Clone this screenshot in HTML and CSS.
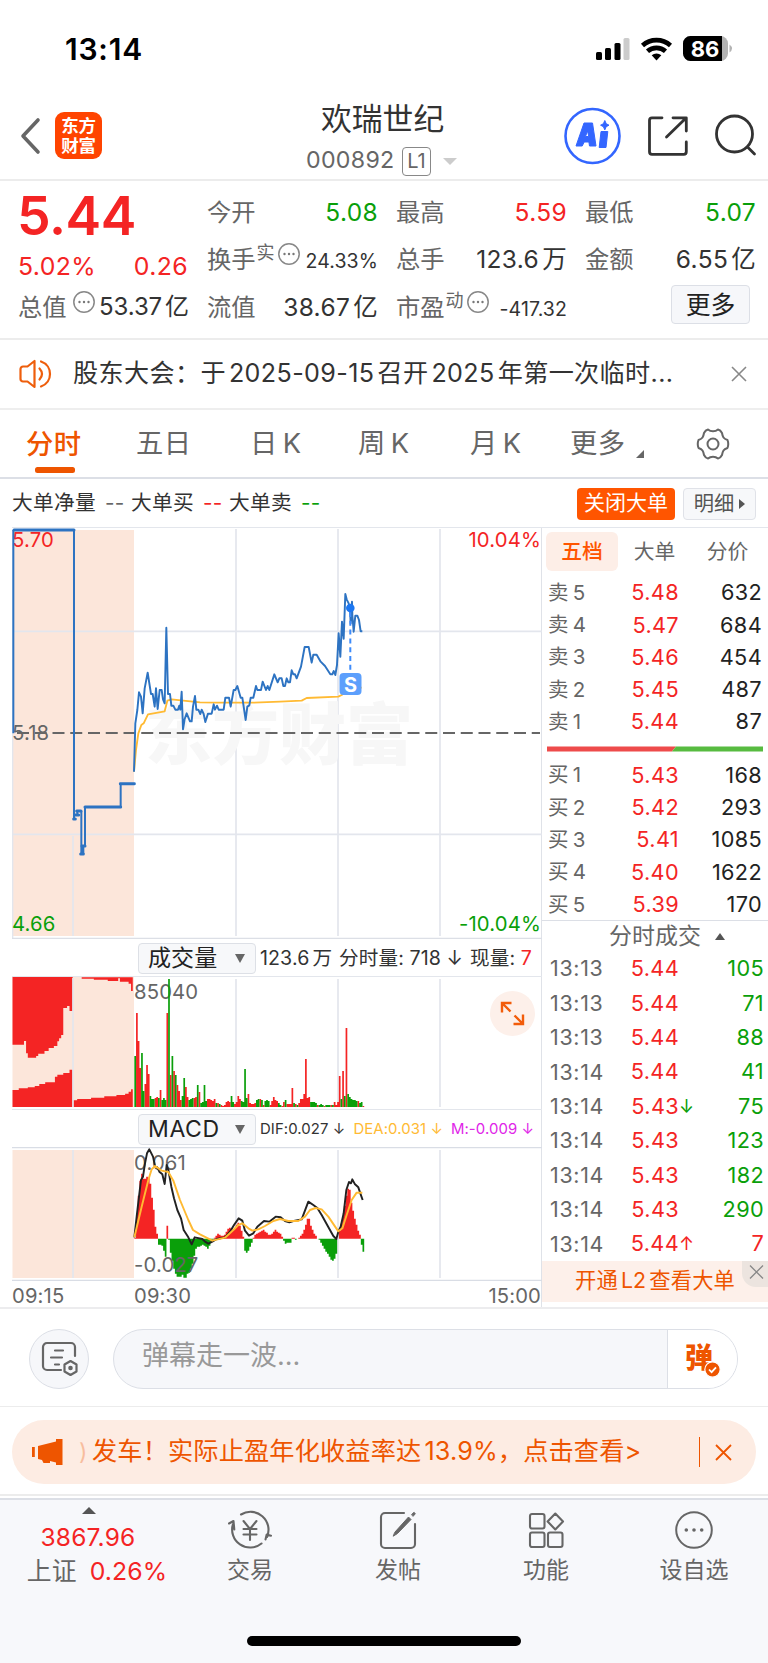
FILE: index.html
```html
<!DOCTYPE html>
<html lang="zh-CN">
<head>
<meta charset="utf-8">
<title>欢瑞世纪 000892</title>
<link rel="stylesheet" href="styles.css">
</head>
<body>
<header class="status">
  <span class="clock">13:14</span>
  <svg class="status-icons" width="138" height="28" viewBox="0 0 138 28">
    <g fill="#000"><rect x="1" y="17" width="6" height="8" rx="1.500"/><rect x="10" y="13" width="6" height="12" rx="1.500"/><rect x="19.500" y="8" width="6" height="17" rx="1.500"/></g>
    <rect x="28.500" y="3" width="6" height="22" rx="1.500" fill="#ccc"/>
    <g fill="none" stroke="#000" stroke-width="4.600"><path d="M47.500 10.500a21 21 0 0 1 28 0"/><path d="M52.500 16.300a13.500 13.500 0 0 1 18 0"/></g>
    <path d="M61.500 25.500l-4.800-5.200a7.200 7.200 0 0 1 9.600 0z" fill="#000"/>
    <rect x="88" y="1" width="45" height="25" rx="7.500" fill="#b3b3b3"/><path d="M95.500 1H127v25H95.500A7.500 7.500 0 0 1 88 18.500v-10A7.500 7.500 0 0 1 95.500 1z" fill="#000"/>
    <path d="M134.500 9.500q5 4 0 8z" fill="#b3b3b3"/>
    <text x="110" y="21.500" text-anchor="middle" class="battery">86</text>
  </svg>
</header>

<nav class="head">
  <svg class="back" width="22" height="38" viewBox="0 0 22 38"><path d="M18 3L3 19l15 16" fill="none" stroke="#666" stroke-width="3.600" stroke-linecap="round" stroke-linejoin="round"/></svg>
  <div class="logo"><span>东方</span><span>财富</span></div>
  <div class="title">
    <h1>欢瑞世纪</h1>
    <div class="code"><span>000892</span><b>L1</b><i class="tri-down"></i></div>
  </div>
  <svg class="head-icons" width="196" height="60" viewBox="562 106 196 60">
    <circle cx="592.500" cy="136" r="27" fill="none" stroke="#3366ff" stroke-width="2.600"/>
    <path d="M584 123h8.500l3.500 23h-6.500l-.6-4h-4.700l-2 4h-6.200zM587.500 131l-2 5.500h3.300zM601 131.500h6.800l-1.800 16h-6.800zM604.800 120.500l1.400 3.200 2.800 1.500-2.800 1.500-1.400 3.200-1.400-3.200-2.800-1.500 2.800-1.500z" fill="#3366ff" fill-rule="evenodd" stroke="#3366ff" stroke-linejoin="round"/>
    <g fill="none" stroke="#333" stroke-width="2.800" stroke-linecap="round" stroke-linejoin="round"><path d="M662 117.800h-10a2.500 2.500 0 0 0-2.500 2.500v31.500a2.500 2.500 0 0 0 2.500 2.500h31.800a2.500 2.500 0 0 0 2.500-2.500V142M673 117.800h13.300V131M685.500 118.500L666.500 137"/><circle cx="734.500" cy="134" r="18"/><path d="M747.500 147l7 7"/></g>
  </svg>
</nav>

<section class="quote">
  <div class="col">
    <div class="price">5.44</div>
    <div class="row chg red"><span>5.02%</span><span>0.26</span></div>
    <div class="row"><label>总值</label><svg class="more-dot first" viewBox="0 0 22 22"><use href="#dots"/></svg><em>53.37<u></u>亿</em></div>
  </div>
  <div class="col">
    <div class="row"><label>今开</label><em class="green">5.08</em></div>
    <div class="row"><label>换手<sup>实</sup></label><svg class="more-dot" viewBox="0 0 22 22"><use href="#dots"/></svg><em class="small">24.33%</em></div>
    <div class="row"><label>流值</label><em>38.67<u></u>亿</em></div>
  </div>
  <div class="col">
    <div class="row"><label>最高</label><em class="red">5.59</em></div>
    <div class="row"><label>总手</label><em>123.6<u></u>万</em></div>
    <div class="row"><label>市盈<sup>动</sup></label><svg class="more-dot" viewBox="0 0 22 22"><use href="#dots"/></svg><em class="small">-417.32</em></div>
  </div>
  <div class="col">
    <div class="row"><label>最低</label><em class="green">5.07</em></div>
    <div class="row"><label>金额</label><em>6.55<u></u>亿</em></div>
    <div class="row end"><span class="btn-more">更多</span></div>
  </div>
</section>

<section class="notice">
  <svg width="34" height="30" viewBox="0 0 34 30" fill="none" stroke="#ee5e0c" stroke-width="2.200" stroke-linejoin="round" stroke-linecap="round"><path d="M15.500 2v26l-7-5.500H4A2.500 2.500 0 0 1 1.500 20V10A2.500 2.500 0 0 1 4 7.500h4.500z"/><path d="M20.500 9.500q5 5.500 0 11M22 2.500c12 4 12 21 0 25"/></svg>
  <p>股东大会：于<u></u>2025-09-15<u></u>召开<u></u>2025<u></u>年第一次临时...</p>
  <svg width="16" height="16" viewBox="0 0 16 16"><path d="M1 1l14 14M15 1L1 15" stroke="#888" stroke-width="1.600"/></svg>
</section>

<nav class="tabs">
  <span class="on">分时</span><span>五日</span><span>日<u></u>K</span><span>周<u></u>K</span><span>月<u></u>K</span><span>更多</span><i class="corner"></i>
  <svg width="34" height="34" viewBox="0 0 34 34" fill="none" stroke="#666" stroke-width="2" stroke-linejoin="round"><path d="M12 2.500q2 1.800 5 1.800t5-1.800q2.500.5 4 3.500.5 3 1.500 4.500t4 2.500q1.500 4 0 8-3 1-4 2.500T26 28q-1.500 3-4 3.500-2-1.800-5-1.800t-5 1.800Q9.500 31 8 28q-.5-3-1.500-4.500T2.500 21q-1.500-4 0-8 3-1 4-2.500T8 6q1.500-3 4-3.500z"/><circle cx="17" cy="17" r="5.500"/></svg>
</nav>

<section class="orders">
  <span>大单净量</span><span class="gray d">--</span><span>大单买</span><span class="red d">--</span><span>大单卖</span><span class="green d">--</span>
  <b class="btn-close">关闭大单</b><b class="btn-detail">明细<i></i></b>
</section>

<main class="market">
  <div class="charts">
    <svg class="chart-price" width="530" height="412" viewBox="12 527 530 412">
      <path d="M12 527.500H542" stroke="#e3e6ec" stroke-width="1"/>
      <rect x="12.500" y="530" width="121.500" height="406" fill="#fce6da"/>
      <path d="M12.500 530V938M12 631.300H542M12 834.300H542M73 836V936M236 529V936M338 529V936M440 529V936" stroke="#e3e6ed" stroke-width="1.700" fill="none"/>
      <text x="145" y="759" class="watermark">东方财富</text>
      <path d="M12 733H540" stroke="#666" stroke-width="2" stroke-dasharray="12 5.750" stroke-dashoffset="-5"/>
      <text x="12" y="547" class="axis red">5.70</text><text x="12" y="740" class="axis gray">5.18</text><text x="12" y="931" class="axis green">4.66</text>
      <text x="541" y="547" class="axis red" text-anchor="end">10.04%</text><text x="541" y="931" class="axis green" text-anchor="end">-10.04%</text>
      <g transform="translate(0 520) scale(.33333)" fill="none" stroke="#2d73c2">
        <path stroke-width="6" d="M40 640V30M222 30V897M232 885V873M244 873V1002M250 1002V978H255V861M362 861V791"/>
        <path stroke-width="9" stroke-linecap="round" d="M42 30H222M221 897H226M224 885H236M230 873H243M242 1002H250M246 978H255M255 861H362M361 791H403"/>
      </g>
      <g transform="translate(120 560) scale(.33333)" fill="none" stroke-linejoin="round">
        <polyline stroke="#ffba33" stroke-width="5.500" points="42,635 48,570 55,520 64,495 71,490 84,463 134,454 142,422 155,418 190,422 240,427 290,428 400,428 480,425 545,422 560,414 655,410 665,405 675,398 690,385 725,383"/>
        <polyline stroke="#2d73c2" stroke-width="5.800" points="42,635 46,490 52,450 57,397 63,410 68,460 74,385 83,338 93,402 98,402 104,440 108,385 113,447 119,390 125,390 129,418 134,430 139,203 144,402 150,402 154,437 160,437 166,449 174,449 178,437 181,449 185,395 189,508 194,477 200,460 210,484 215,484 219,440 225,408 229,449 235,449 241,462 245,449 251,462 256,486 264,461 275,461 281,433 285,449 291,437 296,449 311,449 316,413 327,413 332,440 341,390 346,390 352,378 362,413 367,413 377,480 382,440 388,436 392,413 400,413 408,378 412,390 423,390 428,365 438,390 443,378 448,390 463,343 473,367 478,355 485,355 490,378 495,378 500,355 505,367 510,367 515,331 520,343 525,343 530,355 543,320 554,261 566,261 575,308 580,284 590,284 602,305 615,318 631,343 637,343 641,333 646,345 651,315 656,220 661,290 666,185 671,236 676,102 680,118 686,130 690,150 692,190 696,125 697,165 701,215 706,167 712,167 717,180 722,214 727,214"/>
      </g>
      <path d="M350.300 612V674" stroke="#3d8bfa" stroke-width="2" stroke-dasharray="5 3.800"/><circle cx="350.300" cy="608" r="4.300" fill="#1c77f2"/>
      <rect x="339.500" y="673" width="22" height="22" rx="4" fill="#5c9ffc"/><text x="350.500" y="691.500" text-anchor="middle" class="sell">S</text>
      <path d="M12 938.500H542" stroke="#dcdfe6" stroke-width="1.500"/>
    </svg>
    <div class="indicator">
      <div class="select"><span>成交量</span><i></i></div>
      <span class="vol-a">123.6<u></u>万</span><span class="vol-b">分时量: 718 ↓</span><span>现量: <b class="red">7</b></span>
    </div>
    <svg width="530" height="134" viewBox="12 976 530 134">
      <path d="M12 976.500H542M12 1109.500H542" stroke="#e3e6ec"/>
      <rect x="12.500" y="977" width="121.500" height="130" fill="#fce6da"/>
      <g transform="translate(0 930) scale(.34758 .33333)" fill="#f42424">
        <path d="M36 141H209V243H200V228H193V234H182V315H176V325H170V334H165V348H155V354H140V363H128V371H110V378H104V383H80V370H75V333H69V344H36zM36 531V480H54V475H80V472H100V468H113V462H130V457H158V440H165V434H182V429H200V419H209V531zM235 142H382V183H377V161H370V155H345V145H340V153H310V149H270V146H235zM210 531V511H222V507H262V503H300V499H335V495H360V491H370V485H377V478H382V531z"/>
      </g>
      <path d="M73 978V1107M236 979V1107M338 979V1107M440 979V1107" stroke="#e3e6ed" stroke-width="1.700"/>
      <text x="134" y="998.500" class="axis gray">85040</text>
      <path id="vol-up" class="up"/><path id="vol-down" class="down"/>
      <circle cx="512.500" cy="1013.500" r="22.500" fill="#fdf0ea"/>
      <path d="M510.500 1011.500L502 1003M502 1012.500V1003H511.500M514.500 1015.500l8.500 8.500M523 1014.500V1024H513.500" fill="none" stroke="#f25c0a" stroke-width="2.400"/>
    </svg>
    <div class="indicator macd">
      <div class="select"><span>MACD</span><i></i></div>
      <span>DIF:0.027 ↓</span><span class="amber">DEA:0.031 ↓</span><span class="violet">M:-0.009 ↓</span>
    </div>
    <svg width="530" height="134" viewBox="12 1147 530 134">
      <path d="M12 1147.500H542M12 1280.500H542" stroke="#d9dde5" stroke-width="1.300"/>
      <rect x="12.500" y="1150" width="121.500" height="128" fill="#fce6da"/>
      <path d="M73 1150V1278M236 1150V1278M338 1150V1278M440 1150V1278" stroke="#e3e6ed" stroke-width="1.700"/>
      <path id="macd-up" class="up"/><path id="macd-down" class="down"/>
      <text x="134" y="1169.500" class="axis gray">0.061</text><text x="134" y="1272" class="axis gray">-0.027</text>
      <g transform="translate(125 1030) scale(.33333)" fill="none" stroke-width="5.800" stroke-linejoin="round">
        <polyline stroke="#222" points="28,622 35,560 42,500 48,450 54,440 60,400 66,370 73,358 84,380 91,412 97,412 103,425 112,433 119,462 125,405 130,420 139,470 147,505 157,540 168,565 176,600 190,622 200,643 209,622 232,627 240,635 250,641 262,635 275,627 300,622 315,605 327,585 341,565 352,572 360,602 372,617 385,610 397,590 417,573 433,575 452,560 467,562 480,573 493,577 510,572 530,568 550,515 565,525 577,534 590,555 612,595 625,618 634,627 640,605 647,590 656,550 664,480 672,456 678,460 682,448 690,463 700,472 706,490 713,510"/>
        <polyline stroke="#ffba33" points="28,622 50,530 70,450 80,418 90,408 110,422 130,426 145,452 165,510 190,570 204,600 225,613 262,632 300,623 325,600 340,585 352,580 370,595 382,602 400,598 420,588 445,573 465,567 490,573 520,573 540,560 555,540 572,534 590,538 610,560 640,604 652,595 665,555 680,510 695,488 712,488"/>
      </g>
    </svg>
    <div class="times"><span>09:15</span><span>09:30</span><span>15:00</span></div>
  </div>

  <aside class="book">
    <div class="book-tabs"><b>五档</b><span>大单</span><span>分价</span></div>
    <div class="levels">
      <div><span>卖<u></u>5</span><span>5.48</span><span>632</span></div>
      <div><span>卖<u></u>4</span><span>5.47</span><span>684</span></div>
      <div><span>卖<u></u>3</span><span>5.46</span><span>454</span></div>
      <div><span>卖<u></u>2</span><span>5.45</span><span>487</span></div>
      <div><span>卖<u></u>1</span><span>5.44</span><span>87</span></div>
    </div>
    <svg class="ratio" width="216" height="6" viewBox="0 0 216 6"><path d="M0 0.500H129L125 5.500H0z" fill="#ee4b4b"/><path d="M129 0.500H216V5.500H125z" fill="#57bb40"/></svg>
    <div class="levels buy">
      <div><span>买<u></u>1</span><span>5.43</span><span>168</span></div>
      <div><span>买<u></u>2</span><span>5.42</span><span>293</span></div>
      <div><span>买<u></u>3</span><span>5.41</span><span>1085</span></div>
      <div><span>买<u></u>4</span><span>5.40</span><span>1622</span></div>
      <div><span>买<u></u>5</span><span>5.39</span><span>170</span></div>
    </div>
    <div class="trade-head">分时成交<i class="tri-up"></i></div>
    <div class="trades">
      <div><span>13:13</span><span>5.44</span><i></i><span>105</span></div>
      <div><span>13:13</span><span>5.44</span><i></i><span>71</span></div>
      <div><span>13:13</span><span>5.44</span><i></i><span>88</span></div>
      <div><span>13:14</span><span>5.44</span><i></i><span>41</span></div>
      <div><span>13:14</span><span>5.43</span><i class="green">↓</i><span>75</span></div>
      <div><span>13:14</span><span>5.43</span><i></i><span>123</span></div>
      <div><span>13:14</span><span>5.43</span><i></i><span>182</span></div>
      <div><span>13:14</span><span>5.43</span><i></i><span>290</span></div>
      <div><span>13:14</span><span>5.44</span><i class="red">↑</i><span class="red">7</span></div>
    </div>
    <div class="l2"><span>开通<u></u>L2<u></u>查看大单</span><svg width="26" height="26" viewBox="0 0 26 26"><path d="M0 0H26V26H14A14 14 0 0 1 0 12z" fill="#ece4df"/><path d="M8 4.500l13 13M21 4.500l-13 13" stroke="#888" stroke-width="1.300"/></svg></div>
  </aside>
</main>

<section class="danmu">
  <div class="round">
    <svg width="38" height="36" viewBox="0 0 38 36" fill="none" stroke="#666" stroke-width="2.200" stroke-linecap="round" stroke-linejoin="round"><path d="M20 29H6a4 4 0 0 1-4-4V6a4 4 0 0 1 4-4h24a4 4 0 0 1 4 4v9M14 9.500h8M10 16.500h11M14 23.500h4"/><path d="M29.500 20l6 3.500v7l-6 3.500-6-3.500v-7z"/><circle cx="29.500" cy="27" r="1.200" fill="#666"/></svg>
  </div>
  <div class="pill"><span>弹幕走一波...</span><div class="send"><b>弹</b><svg width="17" height="17" viewBox="-1 -1 17 17"><circle cx="7.500" cy="7.500" r="7.700" fill="#ee5500" stroke="#fff" stroke-width="1.200"/><path d="M4 7.500l2.600 2.700L11 5.300" fill="none" stroke="#fff" stroke-width="1.800"/></svg></div></div>
</section>

<section class="promo-wrap">
  <div class="promo">
    <svg width="32" height="28" viewBox="0 0 32 28" fill="#ee5500"><path d="M0 9h2.800v10H0zM6 8L24 3.500V1h6.500v26H24v-2.500l-6-1.500v2h-6.500l-1.500-3-4-1z"/></svg>
    <span class="fade">)</span>
    <p>发车！实际止盈年化收益率达<u></u>13.9%，点击查看&gt;</p>
    <i></i><svg width="17" height="17" viewBox="0 0 17 17"><path d="M1 1l15 15M16 1L1 16" stroke="#ee5500" stroke-width="1.800"/></svg>
  </div>
</section>

<footer class="bottom">
  <div class="index"><i class="tri-up"></i><strong class="red">3867.96</strong><p>上证<span class="red">0.26%</span></p></div>
  <div class="item"><svg width="44" height="40" viewBox="0 0 44 40" fill="none" stroke="#666" stroke-width="2.100" stroke-linecap="round" stroke-linejoin="round"><path d="M13 4.500a18 18 0 0 1 26 22.500M33.500 33.500A18 18 0 0 1 5 14M1 13.500l4.500-2.500.8 8.500M37.500 29.500l1.200-5 4.300 1.200M15.500 11l6.500 8 6.500-8M22 19v11M15.500 19h13M15.500 24.500h13"/></svg><span>交易</span></div>
  <div class="item"><svg width="40" height="40" viewBox="0 0 40 40" fill="none" stroke="#666" stroke-width="2.100" stroke-linecap="round" stroke-linejoin="round"><path d="M26 3H7a4 4 0 0 0-4 4v27a4 4 0 0 0 4 4h26a4 4 0 0 0 4-4V14"/><path d="M17 22L30.500 7l2.500 2.500L19.500 23.500 15.500 26zM33.800 4.300l2.300-2 1.200 1.500-2 2.300z" fill="#666" stroke-width="1"/></svg><span>发帖</span></div>
  <div class="item"><svg width="40" height="40" viewBox="0 0 40 40" fill="none" stroke="#666" stroke-width="2.100" stroke-linejoin="round"><rect x="4" y="4" width="14.500" height="14.500" rx="2"/><rect x="4" y="22.500" width="14.500" height="14.500" rx="2"/><rect x="22" y="22.500" width="14.500" height="14.500" rx="2"/><path d="M29.300 3.500l7.700 8-7.700 8-7.700-8z"/></svg><span>功能</span></div>
  <div class="item"><svg width="40" height="40" viewBox="0 0 40 40"><circle cx="20" cy="20" r="17.800" fill="none" stroke="#666" stroke-width="2"/><g fill="#666"><circle cx="12.300" cy="20" r="1.800"/><circle cx="20" cy="20" r="1.800"/><circle cx="27.700" cy="20" r="1.800"/></g></svg><span>设自选</span></div>
</footer>
<div class="home"><i></i></div>

<svg width="0" height="0" class="defs"><defs><g id="dots"><circle cx="11" cy="11" r="10.200" fill="none" stroke="#888" stroke-width="1.500"/><g fill="#777"><circle cx="6.500" cy="11" r="1.200"/><circle cx="11" cy="11" r="1.200"/><circle cx="15.500" cy="11" r="1.200"/></g></g></defs></svg>
<script src="charts.js"></script>
</body>
</html>
```

FILE: styles.css
```css
* { box-sizing: border-box; margin: 0; padding: 0; }
body { width: 768px; background: #fff; color: #333; font-family: Inter, "Noto Sans CJK SC", sans-serif; line-height: 1; white-space: nowrap; overflow-x: hidden; }
svg { display: block; flex: none; }
i, em { font-style: normal; }
u { display: inline-block; width: 3px; text-decoration: none; }
.red { color: #f42424; fill: #f42424; }
.green { color: #0a9f0a; fill: #0a9f0a; }
.gray { color: #666; fill: #666; }
.defs { position: absolute; }

.status { height: 95px; padding: 0 35px 0 65px; display: flex; justify-content: space-between; }
.clock { font-size: 30px; font-weight: 600; padding-top: 34px; letter-spacing: .8px; color: #000; }
.status-icons { margin-top: 35px; }
.battery { font: 700 22px Inter; fill: #fff; }

.head { height: 86px; border-bottom: 2px solid #ececec; display: flex; padding-left: 20px; }
.back { margin-top: 22px; }
.logo { width: 47px; height: 47px; margin: 17px 0 0 13px; border-radius: 9px; background: #ff4400; color: #fff; display: flex; flex-direction: column; align-items: center; justify-content: center; font-size: 17.500px; font-weight: 700; line-height: 19.500px; letter-spacing: -.3px; }
.title { width: 460px; display: flex; flex-direction: column; align-items: flex-start; padding: 7px 0 0 219px; }
.title h1 { font-size: 30.800px; font-weight: 400; line-height: 33px; }
.code { display: flex; align-items: center; font-size: 23.200px; color: #666; height: 32px; margin: 10px 0 0 -15px; letter-spacing: .3px; }
.code span { width: 91px; }
.code b { font-weight: 400; font-size: 20px; width: 29px; height: 29px; line-height: 27px; margin-left: 5px; text-align: center; border: 1.500px solid #888; border-radius: 4px; letter-spacing: 0; }
.tri-down { margin-left: 12px; border: 7px solid transparent; border-top-color: #ccc; border-bottom: 0; }
.head-icons { margin-top: 11px; }

.quote { height: 159px; border-bottom: 2px solid #ececec; display: grid; grid-template-columns: repeat(4, 170px); gap: 19px; padding: 7px 12px 0 18px; }
.row { height: 47.700px; display: flex; align-items: center; font-size: 24.300px; }
.row label { color: #666; display: flex; }
.row em { margin: 0 -1px 0 auto; font-size: 24.500px; letter-spacing: .35px; }
.row em.small { font-size: 19.500px; padding-top: 5px; letter-spacing: .1px; }
.row sup { font-size: 18px; line-height: 11px; margin-left: 1px; }
.more-dot { width: 22px; height: 22px; margin: -11px 0 0 3px; }
.more-dot.first { margin: -9px 0 0 6px; }
.row .first + em { font-size: 24px; letter-spacing: -.1px; }
.price { height: 57px; line-height: 56px; font-size: 53.500px; font-weight: 600; color: #f42424; letter-spacing: -.4px; margin-left: -1px; }
.row.chg { height: 38px; justify-content: space-between; padding-top: 4px; font-size: 24.800px; letter-spacing: .4px; }
.end { justify-content: flex-end; padding-right: 5px; }
.btn-more { width: 79px; height: 39px; line-height: 38px; text-align: center; border: 1px solid #dcdfe6; border-radius: 4px; background: #f6f7fa; margin-top: -5px; font-size: 24.800px; color: #222; }

.notice { height: 70px; border-bottom: 2px solid #eee; display: flex; align-items: center; padding: 0 21px 0 19px; }
.notice p { font-size: 25.100px; margin-left: 20px; width: 640px; letter-spacing: .39px; }
.notice p + svg { margin-left: auto; }

.tabs { height: 69px; border-bottom: 2px solid #dcdfe6; display: flex; align-items: center; padding-left: 26px; font-size: 27.300px; color: #666; }
.tabs span { letter-spacing: .5px; width: 110px; padding-top: 1px; }
.tabs span:nth-child(2) { width: 114px; }
.tabs span:nth-child(3) { width: 108px; }
.tabs span:nth-child(4) { width: 112px; }
.tabs span:nth-child(5) { width: 100px; }
.tabs span:nth-child(6) { width: 66px; }
.tabs .on { color: #ee5500; font-weight: 500; height: 61px; line-height: 63px; display: flex; flex-direction: column; padding: 0; }
.tabs .on::after { content: ""; width: 40px; height: 6px; border-radius: 2.500px; background: #ee5500; margin: -9px 0 0 9px; flex: none; }
.tabs span u { width: 5px; }
.corner { border-left: 8px solid transparent; border-bottom: 8px solid #666; margin-top: 20px; }
.tabs svg { margin-left: 52px; }

.orders { height: 48px; display: flex; align-items: center; padding: 1px 12px 0; font-size: 20.700px; letter-spacing: .3px; }
.orders .d { width: 35px; padding-left: 9px; }
.orders b { font-weight: 400; height: 32px; line-height: 30px; border-radius: 4px; text-align: center; letter-spacing: 0; }
.btn-close { width: 98px; background: #ff5500; color: #fff; margin-left: auto; font-size: 21px; }
.btn-detail { width: 73px; margin-left: 8px; border: 1px solid #e0e2e8; background: #f7f8fa; color: #555; display: flex; align-items: center; justify-content: center; font-size: 20.300px; }
.btn-detail i { border: 5px solid transparent; border-left: 6px solid #555; border-right: 0; margin-left: 5px; }

.market { display: flex; height: 782px; border-bottom: 2px solid #ececee; }
.charts { width: 542px; padding-left: 12px; border-right: 1.500px solid #dfe2e8; }
.axis { font: 20.300px Inter; letter-spacing: .15px; }
.watermark { font: 900 67px "Noto Sans CJK SC"; fill: #f7f7f7; }
.sell { font: 700 20px Inter; fill: #fff; }
.up, .down { stroke-width: 1.700; fill: none; }
.up { stroke: #f42424; } .down { stroke: #0a9f0a; }
.indicator { height: 37px; display: flex; align-items: center; padding: 2px 0 0 126px; font-size: 19.600px; letter-spacing: .1px; }
.select { flex: none; width: 118px; height: 31px; border: 1px solid #dde0e6; border-radius: 4px; background: #f7f8fa; display: flex; align-items: center; justify-content: space-between; padding: 0 10px 0 9px; font-size: 23px; color: #222; margin: -1px 4px 0 0; }
.select i { border: 5px solid transparent; border-top: 9px solid #666; border-bottom: 0; }
.indicator b { font-weight: 400; }
.vol-a { margin-right: 7px; } .vol-b { margin-right: 7px; }
.macd { font-size: 14.900px; letter-spacing: .1px; }
.macd .select { letter-spacing: .6px; }
.macd > span { margin-right: 8px; }
.amber { color: #ffba33; } .violet { color: #e025e8; }
.times { display: flex; font-size: 20.200px; height: 31px; align-items: center; color: #666; letter-spacing: .15px; }
.times span:first-child { width: 122px; } .times span:last-child { margin-left: auto; }

.book { width: 226px; font-size: 21.700px; color: #222; }
.book-tabs { display: flex; height: 50px; padding: 4px 0 0 4px; border-top: 1px solid #e3e6ec; font-size: 20.800px; color: #666; }
.book-tabs b { width: 72px; height: 39px; line-height: 39px; text-align: center; border-radius: 6px; background: #fdeee7; color: #ff5500; font-weight: 500; }
.book-tabs span { width: 73px; text-align: center; line-height: 39px; }
.levels { padding: 0 6px; }
.levels div { display: flex; height: 32.300px; align-items: center; }
.levels span { letter-spacing: .35px; }
.levels span:nth-child(1) { width: 54px; color: #666; font-size: 20.500px; }
.levels span:nth-child(2) { width: 77px; text-align: right; color: #f42424; }
.levels span:nth-child(3) { margin-left: auto; }
.levels u { width: 4px; }
.ratio { margin: 8px 0 7px 5px; }
.trade-head { border-top: 1.500px solid #dcdfe6; height: 32px; display: flex; align-items: center; padding: 1px 0 0 67px; color: #666; font-size: 23px; margin-top: -1px; }
.tri-up { border: 5px solid transparent; border-bottom: 7px solid #555; border-top: 0; }
.trade-head i { margin-left: 14px; }
.trades { padding: 0 4px 0 8px; }
.trades div { display: flex; height: 34.400px; align-items: center; }
.trades span { letter-spacing: .35px; }
.trades span:nth-child(1) { width: 60px; color: #666; font-size: 21.400px; letter-spacing: .7px; }
.trades span:nth-child(2) { width: 69px; text-align: right; color: #f42424; }
.trades i { width: 15px; font-size: 18px; text-align: center; }
.trades span:nth-child(4) { margin-left: auto; color: #0a9f0a; }
.trades span.red:nth-child(4) { color: #f42424; }
.l2 { height: 41px; background: #fdf0ea; display: flex; color: #ee5500; font-size: 21.300px; letter-spacing: .15px; justify-content: space-between; padding-left: 33px; }
.l2 span { line-height: 38px; }

.danmu { height: 98px; border-bottom: 1px solid #ececec; display: flex; align-items: center; padding: 3px 30px 0 29px; }
.round { width: 60px; height: 60px; border: 1.500px solid #dcdfe6; border-radius: 50%; background: #f6f7fa; display: flex; align-items: center; justify-content: center; padding-left: 2px; }
.pill { margin-left: 24px; width: 625px; height: 60px; border: 1.500px solid #dcdfe6; border-radius: 30px; background: #f6f7fa; overflow: hidden; display: flex; justify-content: space-between; align-items: stretch; }
.pill span { font-size: 27px; line-height: 52px; color: #999; padding-left: 28px; }
.send { width: 70px; border-left: 1.500px solid #dcdfe6; background: #fff; display: flex; align-items: center; padding-left: 17px; }
.send b { font-size: 28px; font-weight: 800; color: #ee5500; margin-top: -2px; }
.send svg { margin: 21px 0 0 -9px; }

.promo-wrap { height: 89px; padding: 13px 12px 0; border-bottom: 2px solid #ececec; }
.promo { height: 64px; border-radius: 32px; background: #fdece3; color: #ee5500; display: flex; align-items: center; padding: 0 24px 0 20px; font-size: 25.200px; }
.fade { opacity: .3; margin: 0 2px 0 15px; width: 11px; font-size: 23px; }
.promo p { letter-spacing: .15px; }
.promo > i { width: 1.500px; height: 30px; background: #ee5500; margin-left: auto; margin-right: 15px; }

.bottom { height: 119px; margin-top: 2px; border-top: 2px solid #dcdfe6; background: #f7f8fb; display: flex; color: #666; }
.index { width: 176px; display: flex; flex-direction: column; align-items: center; padding-top: 7px; }
.index i { border-left-width: 7px; border-right-width: 7px; margin-left: 1px; }
.index strong { font-weight: 400; font-size: 24.500px; margin-top: 11px; letter-spacing: .2px; }
.index p { font-size: 24.800px; margin: 9px 0 0 18px; letter-spacing: .1px; }
.index p span { margin-left: 13px; }
.item { width: 148px; display: flex; flex-direction: column; align-items: center; padding-top: 10px; }
.item span { font-size: 23px; margin-top: 9px; }
.home { height: 46px; background: #f7f8fb; display: flex; justify-content: center; padding-top: 19px; }
.home i { width: 274px; height: 10px; border-radius: 5px; background: #000; }
```

FILE: charts.js
```js
// Bar heights in pixels, one per minute from 09:30.
// Volume: positive = rising minute, negative = falling minute.
var volume = [-51,94,66,39,-54,-16,23,42,33,-11,-8,-8,9,10,-9,17,-7,-9,-7,94,-128,32,-51,36,-32,22,16,7,-11,-29,20,10,-7,-8,-9,9,10,-22,15,-4,-5,-22,-6,8,8,7,6,8,-4,4,-3,2,1,2,5,6,5,-11,-5,3,5,11,8,-6,-5,-38,-9,13,4,3,3,4,-7,-8,8,-7,2,-6,-7,-6,2,6,10,7,6,-4,-2,1,5,-7,3,3,3,19,-4,3,-2,4,8,8,13,48,9,10,-5,-5,-5,-4,2,-2,-3,-2,1,-2,-2,-2,2,-2,5,2,5,31,-8,36,-11,79,-13,-10,-8,-7,-7,-6,6,-4,-5,1];
var macd = [1,25,43,58,65,60,60,62,61,55,41,29,12,5,-6,-6,-7,-12,-18,13,-1,-14,-22,-30,-35,-38,-38,-38,-36,-39,-39,-35,-34,-30,-25,-17,-10,-8,-8,-7,-6,-7,-8,-10,-7,-3,-1,1,3,5,4,3,3,4,7,10,11,10,9,10,14,16,13,8,2,-12,-14,-12,-8,-4,1,4,5,6,7,8,9,7,6,4,4,5,7,9,7,6,5,2,-2,-5,-4,-4,-4,1,1,-1,0,1,3,5,9,14,20,20,13,9,5,3,0,-1,-4,-7,-10,-13,-15,-18,-21,-22,-20,-15,0,8,15,22,33,43,50,49,36,28,20,14,8,4,-6,-13];

function bars(values, base, signed) {
  var up = '', down = '';
  values.forEach(function (v, i) {
    var x = (135.2 + i * 1.69).toFixed(2);
    var end = signed ? base - v : base - Math.abs(v);
    var seg = 'M' + x + ' ' + base + 'V' + end;
    if (v > 0) up += seg; else if (v < 0) down += seg;
  });
  return [up, down];
}
function draw(id, values, base, signed) {
  var d = bars(values, base, signed);
  document.getElementById(id + '-up').setAttribute('d', d[0]);
  document.getElementById(id + '-down').setAttribute('d', d[1]);
}
draw('vol', volume, 1107, false);
draw('macd', macd, 1238.7, true);
```
